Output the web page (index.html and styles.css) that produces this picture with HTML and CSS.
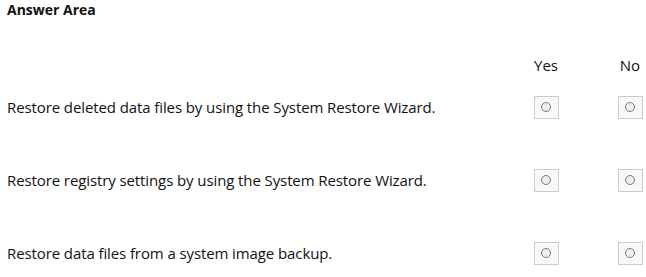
FILE: index.html
```html
<!DOCTYPE html>
<html lang="en">
<head>
    <meta charset="UTF-8">
    <title>Answer Area</title>
    <link rel="stylesheet" href="styles.css">
</head>
<body>
    <div class="answer-area">
        <h1>Answer Area</h1>

        <div class="row head">
            <span></span>
            <span class="col">Yes</span>
            <span class="col">No</span>
        </div>

        <div class="rows">
            <div class="row">
                <span class="statement">Restore deleted data files by using the System Restore Wizard.</span>
                <span class="col"><span class="radio-box"><span class="radio"></span></span></span>
                <span class="col"><span class="radio-box"><span class="radio"></span></span></span>
            </div>
            <div class="row">
                <span class="statement">Restore registry settings by using the System Restore Wizard.</span>
                <span class="col"><span class="radio-box"><span class="radio"></span></span></span>
                <span class="col"><span class="radio-box"><span class="radio"></span></span></span>
            </div>
            <div class="row">
                <span class="statement">Restore data files from a system image backup.</span>
                <span class="col"><span class="radio-box"><span class="radio"></span></span></span>
                <span class="col"><span class="radio-box"><span class="radio"></span></span></span>
            </div>
        </div>
    </div>
</body>
</html>
```

FILE: styles.css
```css
body {
    margin: 0;
    padding: 0;
    background: #fff;
    color: #111;
    font-family: 'Open Sans', sans-serif;
    font-size: 15px;
}
.answer-area {
    padding: 0 1px 0 7px;
}
h1 {
    margin: 0;
    font-size: 14px;
    font-weight: bold;
    line-height: 20px;
}
.row {
    display: grid;
    grid-template-columns: 1fr 30px 30px;
    column-gap: 54px;
    align-items: center;
    height: 24px;
}
.head {
    margin-top: 33px;
    margin-bottom: 18px;
}
.rows {
    display: flex;
    flex-direction: column;
    gap: 49px;
}
.statement {
    letter-spacing: -0.1px;
}
.col {
    display: flex;
    justify-content: center;
    white-space: nowrap;
}
.radio-box {
    display: flex;
    align-items: center;
    justify-content: center;
    width: 23px;
    height: 21px;
    border: 1px solid #cccccc;
    background: #f8f8f8;
}
.radio {
    width: 8px;
    height: 8px;
    border: 1.5px solid #7a7a7a;
    border-radius: 50%;
    background: #eceff2;
}
```
